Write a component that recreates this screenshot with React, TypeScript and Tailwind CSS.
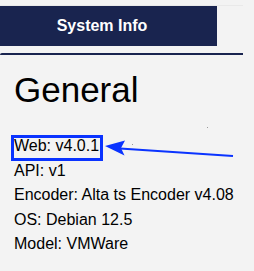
import React from "react";

export default function App() {
  const lines = [
    "API: v1",
    "Encoder: Alta ts Encoder v4.08",
    "OS: Debian 12.5",
    "Model: VMWare",
  ];
  return (
    <div
      className="relative w-[254px] h-[271px] overflow-hidden bg-[#f3f3f3] text-black"
      style={{ fontFamily: '"Liberation Sans", Arial, sans-serif' }}
    >
      <div className="pt-[5px]">
        <div className="w-[243px] border-t border-[#e9e9e9]">
          <div className="ml-[-13px] w-[230px] h-[40px] bg-[#19244f] flex items-center justify-center">
            <span className="text-white font-bold text-[16px] leading-none">System Info</span>
          </div>
        </div>
        <div className="mt-[7px] w-[243px] h-[2px] bg-[#19244f] rounded-tl-[3px]" />
        <div className="pl-[14px] pt-[15px]">
          <div className="text-[35px] leading-[40px]">General</div>
          <div className="mt-[24px] text-[16px] leading-[24.5px]">
            <div>Web: v4.0.1</div>
            {lines.map((l) => (
              <div key={l}>{l}</div>
            ))}
          </div>
        </div>
      </div>

      {/* annotation overlay */}
      <div className="absolute left-[11px] top-[135px] w-[92px] h-[26px] border-[3px] border-[#0a33ff]" />
      <svg
        className="absolute left-0 top-0"
        width="254"
        height="271"
        viewBox="0 0 254 271"
      >
        <line x1="120" y1="148.5" x2="233" y2="156" stroke="#0a33ff" strokeWidth="2.2" />
        <path d="M105 146 L125 140.5 L121 148 L124.5 155.5 Z" fill="#0a33ff" />
        <rect x="207" y="127" width="1" height="1" fill="#9a9a9a" />
        <rect x="132" y="144" width="1" height="1" fill="#9a9a9a" />
      </svg>
    </div>
  );
}
